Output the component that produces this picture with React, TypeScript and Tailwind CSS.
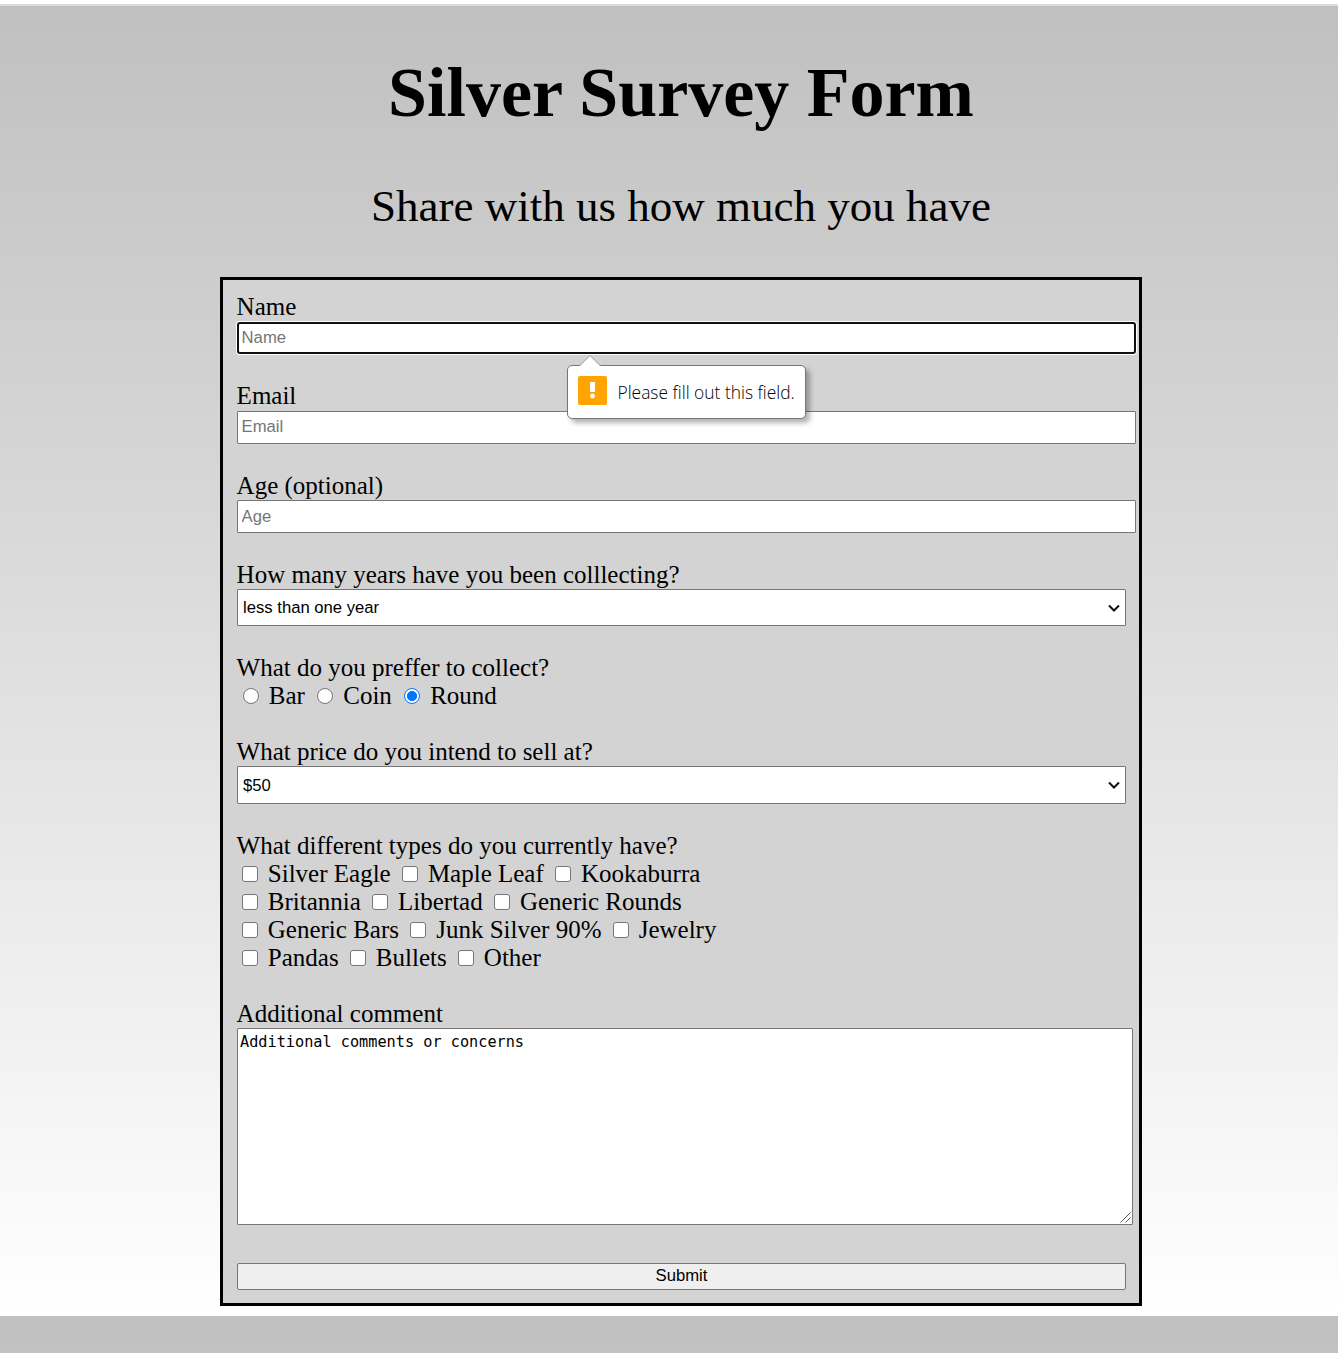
import React from 'react';

const control =
  'block bg-white font-["Liberation_Sans",Arial,sans-serif] text-[16.67px] text-black outline-none placeholder:text-[#757575]';
const thin = ' border border-[#767676] rounded-[1px]';

function Label({ children }: { children: React.ReactNode }) {
  return <div className="-ml-[0.4px] h-7 leading-7 whitespace-nowrap">{children}</div>;
}

function Select({ value, className }: { value: string; className: string }) {
  return (
    <div className={'relative flex w-[889px] items-center ' + className}>
      <select
        defaultValue={value}
        className={control + thin + ' h-full w-full appearance-none pl-[5px]'}
      >
        <option>{value}</option>
      </select>
      <svg
        className="pointer-events-none absolute right-[6px] h-[10px] w-3"
        viewBox="0 0 12 10"
        fill="none"
        stroke="#101010"
        strokeWidth="2"
      >
        <path d="M1 2.5 L6 7.5 L11 2.5" />
      </svg>
    </div>
  );
}

function Radio({ label, checked }: { label: string; checked?: boolean }) {
  return (
    <label className="flex items-center">
      <input
        type="radio"
        name="collect"
        defaultChecked={checked}
        className="mr-[9.8px] ml-[6px] h-4 w-4 appearance-none rounded-full border border-[#767676] bg-white checked:border-[#0075ff] checked:bg-[radial-gradient(circle,#0075ff_4.7px,white_5.3px)]"
      />
      <span className="mr-[6.5px]">{label}</span>
    </label>
  );
}

function Check({ label }: { label: string }) {
  return (
    <label className="flex items-center">
      <input
        type="checkbox"
        className="mr-[9.8px] ml-[5px] h-4 w-4 appearance-none rounded-[3px] border border-[#767676] bg-white"
      />
      <span className="mr-[6.4px]">{label}</span>
    </label>
  );
}

const types = [
  ['Silver Eagle', 'Maple Leaf', 'Kookaburra'],
  ['Britannia', 'Libertad', 'Generic Rounds'],
  ['Generic Bars', 'Junk Silver 90%', 'Jewelry'],
  ['Pandas', 'Bullets', 'Other'],
];

function ValidationBubble() {
  return (
    <div className="absolute top-[43px] left-[330px] z-10 flex h-[54px] w-[239px] items-center rounded-[5px] border border-[#767676] bg-white pl-[10px] shadow-[4px_4px_5px_rgba(0,0,0,0.3)]">
      <svg className="absolute -top-[11px] left-[11px] h-[12px] w-[22px]" viewBox="0 0 22 12">
        <path d="M0.5 11 L11 0.5 L21.5 11 V12 H0.5 Z" fill="white" />
        <path d="M0.5 11 L11 0.5 L21.5 11" fill="none" stroke="#999" strokeWidth="1" />
      </svg>
      <svg className="-mt-1 h-[29px] w-[29px]" viewBox="0 0 29 29">
        <rect width="29" height="29" rx="2" fill="#ffa400" />
        <path d="M12 6 H17 V16 H12 Z" fill="white" />
        <circle cx="14.5" cy="20" r="2.4" fill="white" />
      </svg>
      <span className="ml-[10.5px] whitespace-nowrap font-['Open_Sans',sans-serif] text-[17.4px] font-light text-black">
        Please fill out this field.
      </span>
    </div>
  );
}

export default function App() {
  return (
    <div className="h-[1353px] overflow-hidden bg-white pt-1 font-['Liberation_Serif','Times_New_Roman',serif] text-[25px] text-black">
      <div className="h-[2px] bg-[#dadce0]" />
      <div className="h-[1310px] bg-linear-to-b from-[#c0c0c0] to-white pt-[47px] pl-6">
        <h1 className="text-center text-[70px] leading-[80px] font-bold">Silver Survey Form</h1>
        <p className="mt-[47px] text-center text-[45px] leading-[52px]">
          Share with us how much you have
        </p>
        <form
          noValidate
          className="mx-auto mt-[45px] h-[1029px] w-[922px] border-[3px] border-black bg-[#d3d3d3] pt-[13px] pl-[14px]"
        >
          <Label>Name</Label>
          <div className="relative mt-px">
            <input
              placeholder="Name"
              className={
                control +
                ' h-8 w-[899px] rounded-[3px] border-2 border-[#101010] pl-[2.6px] shadow-[0_0_0_1px_white]'
              }
            />
            <ValidationBubble />
          </div>
          <div className="mt-[28px]">
            <Label>Email</Label>
            <input
              placeholder="Email"
              className={control + thin + ' mt-px h-[33px] w-[899px] pb-px pl-[3.6px]'}
            />
          </div>
          <div className="mt-[28px]">
            <Label>Age (optional)</Label>
            <input
              placeholder="Age"
              className={control + thin + ' h-[33px] w-[899px] pl-[3.6px]'}
            />
          </div>
          <div className="mt-[28px]">
            <Label>How many years have you been colllecting?</Label>
            <Select value="less than one year" className="h-[37px]" />
          </div>
          <div className="mt-[28px]">
            <Label>What do you preffer to collect?</Label>
            <div className="flex h-7 leading-7">
              <Radio label="Bar" />
              <Radio label="Coin" />
              <Radio label="Round" checked />
            </div>
          </div>
          <div className="mt-[28px]">
            <Label>What price do you intend to sell at?</Label>
            <Select value="$50" className="h-[38px]" />
          </div>
          <div className="mt-[28px]">
            <Label>What different types do you currently have?</Label>
            {types.map((row) => (
              <div key={row[0]} className="flex h-7 leading-7">
                {row.map((t) => (
                  <Check key={t} label={t} />
                ))}
              </div>
            ))}
          </div>
          <div className="mt-[28px]">
            <Label>Additional comment</Label>
            <div className="relative w-[896px]">
              <textarea
                defaultValue="Additional comments or concerns"
                className="block h-[197px] w-full resize-none rounded-[1px] border border-[#767676] bg-white px-[2px] py-[3px] font-['DejaVu_Sans_Mono',monospace] text-[15.22px] leading-[20px] text-black outline-none"
              />
              <svg
                className="pointer-events-none absolute right-[2px] bottom-[2px] h-[11px] w-[11px]"
                viewBox="0 0 11 11"
                stroke="#555"
                strokeWidth="1"
              >
                <path d="M0.5 10.5 L10.5 0.5 M5.5 10.5 L10.5 5.5" />
              </svg>
            </div>
          </div>
          <button
            type="button"
            className="mt-[38px] flex h-[27px] w-[889px] items-center justify-center rounded-[2px] border border-[#767676] bg-[#efefef] pb-[2px] font-['Liberation_Sans',Arial,sans-serif] text-[16.67px] leading-[19px]"
          >
            Submit
          </button>
        </form>
      </div>
      <div className="h-[37px] bg-linear-to-b from-[#c0c0c0] to-[#c2c2c2]" />
    </div>
  );
}
